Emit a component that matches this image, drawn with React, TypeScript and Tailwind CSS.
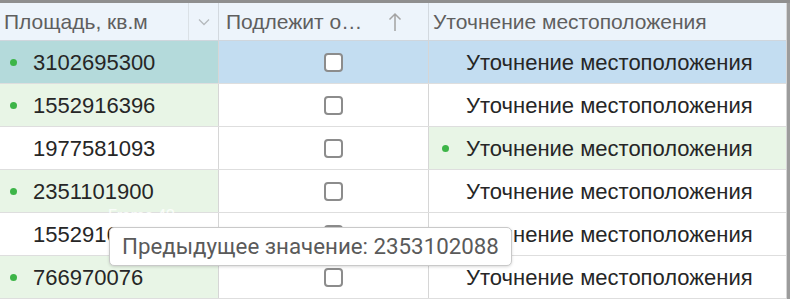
const rows = [
  { area: "3102695300", areaMark: true, locMark: false, selected: true },
  { area: "1552916396", areaMark: true, locMark: false, selected: false },
  { area: "1977581093", areaMark: false, locMark: true, selected: false },
  { area: "2351101900", areaMark: true, locMark: false, selected: false },
  { area: "1552916396", areaMark: false, locMark: false, selected: false },
  { area: "766970076", areaMark: true, locMark: false, selected: false },
];

function Dot({ show }: { show: boolean }) {
  return (
    <span className="w-[20px] shrink-0 flex items-center">
      {show && <span className="w-[7px] h-[7px] rounded-full bg-[#3db548]" />}
    </span>
  );
}

function Checkbox() {
  return <span className="w-[19px] h-[19px] rounded-[4px] border-2 border-[#8c8c8c] bg-white" />;
}

export default function App() {
  return (
    <div
      className="relative w-[790px] h-[299px] overflow-hidden bg-white border-t-[3px] border-[#8f8f8f]"
      style={{ fontFamily: '"Liberation Sans", Arial, sans-serif' }}
    >
      <div className="flex h-full">
        <div className="flex-1 border-r border-[#d6d6d6]">
          {/* header */}
          <div className="grid grid-cols-[219px_210px_1fr] h-[38px] bg-[#edf4fb] border-b border-[#cfd6dd] text-[21px] text-[#5f5f5f]">
            <div className="flex border-r border-[#d3d9df]">
              <div className="flex-1 flex items-center pl-[4px] border-r border-[#dbe1e6]">Площадь, кв.м</div>
              <div className="w-[29px] flex items-center justify-center">
                <svg width="12" height="8" viewBox="0 0 12 8" fill="none">
                  <path d="M1 1.5l5 5 5-5" stroke="#b5b9bd" strokeWidth="1.3" />
                </svg>
              </div>
            </div>
            <div className="flex items-center justify-between pl-[7px] pr-[26px] border-r border-[#d3d9df]">
              <span>Подлежит о…</span>
              <svg width="14" height="20" viewBox="0 0 14 20" fill="none">
                <path d="M7 19V2M1.5 7.5L7 2l5.5 5.5" stroke="#a3a3a3" strokeWidth="1.5" />
              </svg>
            </div>
            <div className="flex items-center pl-[4px]">Уточнение местоположения</div>
          </div>
          {/* rows */}
          {rows.map((r, i) => (
            <div
              key={i}
              className="grid grid-cols-[219px_210px_1fr] h-[43px] border-b border-[#dedede] text-[22px] text-[#262626]"
            >
              <div
                className={
                  "flex items-center pl-[10px] border-r border-[#d6d6d6] " +
                  (r.selected ? "bg-[#b4dadb]" : r.areaMark ? "bg-[#e8f5e6]" : "bg-white")
                }
              >
                <Dot show={r.areaMark} />
                <span className="pl-[3px]">{r.area}</span>
              </div>
              <div
                className={
                  "flex items-center justify-center pl-[19px] border-r border-[#d6d6d6] " +
                  (r.selected ? "bg-[#c3ddf1]" : "bg-white")
                }
              >
                <Checkbox />
              </div>
              <div
                className={
                  "flex items-center pl-[13px] " +
                  (r.selected ? "bg-[#c3ddf1]" : r.locMark ? "bg-[#e8f5e6]" : "bg-white")
                }
              >
                <Dot show={r.locMark} />
                <span className="pl-[4px]">Уточнение местоположения</span>
              </div>
            </div>
          ))}
        </div>
        <div className="w-[3px] bg-[#9c9c9c]" />
      </div>

      {/* figma frame label */}
      <div
        className="absolute left-[108px] top-[201px] text-[16px] text-white/80"
        style={{ fontFamily: "Roboto, sans-serif" }}
      >
        Frame 42
      </div>

      {/* tooltip */}
      <div
        className="absolute left-[109px] top-[224px] h-[39px] px-[12px] flex items-center bg-white border border-[#c9c9c9] rounded-[5px] shadow-[0_1px_3px_rgba(0,0,0,0.15)] text-[22.3px] text-[#5a5a5a]"
        style={{ fontFamily: "Roboto, sans-serif" }}
      >
        Предыдущее значение: 2353102088
      </div>
    </div>
  );
}
